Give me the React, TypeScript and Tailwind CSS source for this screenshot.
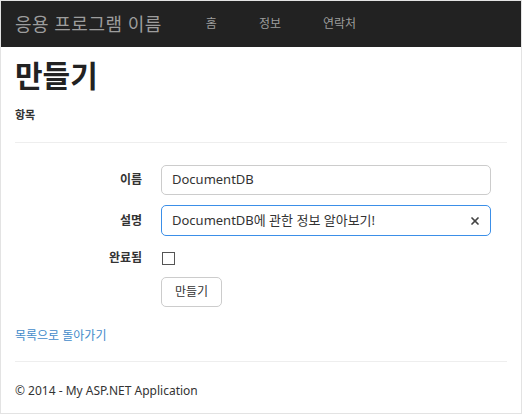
import { X } from "lucide-react";

const FONT = {
  fontFamily: '"Noto Sans", "Noto Sans CJK KR", sans-serif',
};

export default function App() {
  return (
    <div
      className="w-[522px] h-[414px] border border-[#e3e3e3] bg-white text-[#333] overflow-hidden"
      style={FONT}
    >
      {/* Navbar */}
      <nav className="h-[46px] bg-[#222] flex items-center pl-[14px]">
        <span className="text-[18px] text-[#9d9d9d] tracking-[0.5px] leading-none">응용 프로그램 이름</span>
        <div className="flex items-center ml-[44px] gap-[42px] text-[12px] text-[#9d9d9d]">
          <span>홈</span>
          <span>정보</span>
          <span>연락처</span>
        </div>
      </nav>

      <div className="px-[14px]">
        <h2 className="text-[30px] font-bold leading-none mt-[14px] text-[#222]">만들기</h2>
        <h4 className="text-[11px] font-bold mt-[18px] leading-none">항목</h4>
        <hr className="mt-[22px] border-[#eee]" />

        {/* Form */}
        <div className="mt-[22px] flex flex-col gap-[10px]">
          <div className="flex items-center">
            <label className="w-[127px] text-right text-[12px] font-bold">이름</label>
            <div className="ml-[19px] w-[330px] h-[30px] border border-[#ccc] rounded-[5px] flex items-center px-[10px] text-[13px]">
              DocumentDB
            </div>
          </div>
          <div className="flex items-center">
            <label className="w-[127px] text-right text-[12px] font-bold">설명</label>
            <div className="ml-[19px] w-[330px] h-[31px] border border-[#3b8fe8] rounded-[5px] flex items-center pl-[10px] pr-[9px] text-[13px]">
              <span className="flex-1">DocumentDB에 관한 정보 알아보기!</span>
              <X className="w-[12px] h-[12px] text-[#444]" strokeWidth={3.5} />
            </div>
          </div>
          <div className="flex items-center mt-[3px]">
            <label className="w-[127px] text-right text-[12px] font-bold">완료됨</label>
            <span className="ml-[20px] w-[13px] h-[13px] border border-[#555] bg-white" />
          </div>
          <div className="flex">
            <button className="ml-[146px] w-[61px] h-[30px] border border-[#ccc] rounded-[5px] text-[12px] bg-white">
              만들기
            </button>
          </div>
        </div>

        <div className="mt-[20px] text-[12px] text-[#428bca]">목록으로 돌아가기</div>
        <hr className="mt-[16px] border-[#eee]" />
        <footer className="mt-[20px] text-[12px]">© 2014 - My ASP.NET Application</footer>
      </div>
    </div>
  );
}
